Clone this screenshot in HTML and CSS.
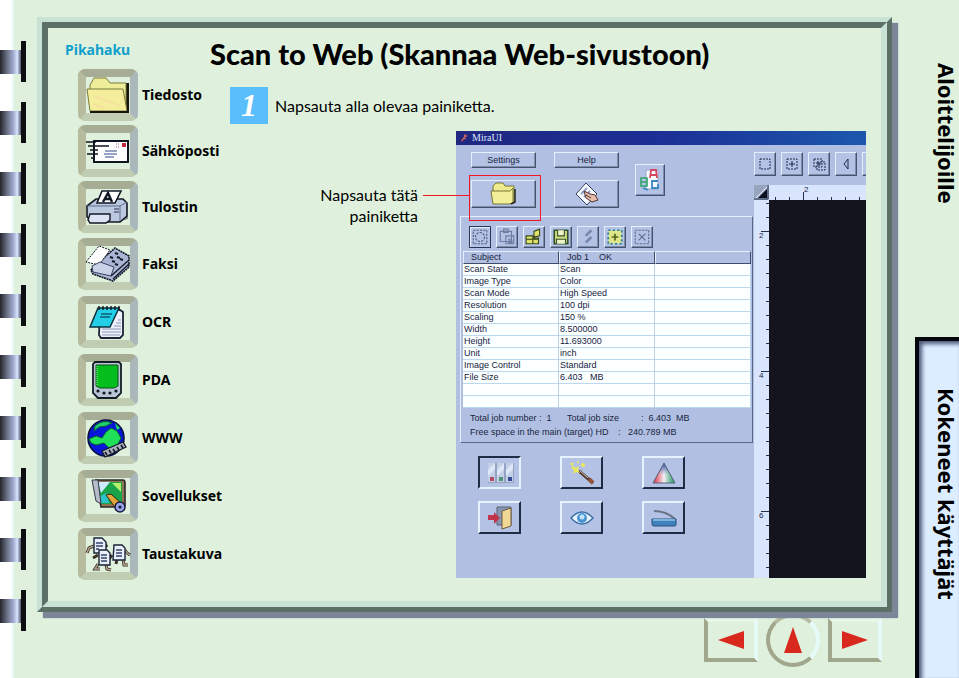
FILE: index.html
```html
<!DOCTYPE html>
<html lang="fi">
<head>
<meta charset="utf-8">
<title>Scan to Web (Skannaa Web-sivustoon)</title>
<link rel="stylesheet" href="styles.css">
</head>
<body>
<div class="page">
  <div class="binder" aria-hidden="true">
    <i class="ring"></i><i class="ring"></i><i class="ring"></i><i class="ring"></i><i class="ring"></i>
    <i class="ring"></i><i class="ring"></i><i class="ring"></i><i class="ring"></i><i class="ring"></i>
  </div>

  <div class="center">
    <div class="board">
      <div class="board-inner">
        <nav class="quick">
          <h2 class="quick-title">Pikahaku</h2>
          <ul class="quick-list">
            <li><a href="#"><span class="key">
              <svg viewBox="0 0 44 38"><path d="M24 7H42V36H8z" fill="#1c1c10"/><path d="M4 14V9L8 2H20L24 7H40V34H6z" fill="#eeed9a" stroke="#77783a"/><path d="M1 13H37L41 35H4z" fill="#f4ee9c" stroke="#77783a"/><path d="M4 36H42V7" fill="none" stroke="#15150c" stroke-width="2"/><path d="M8 20l26 10M7 28l12 4" stroke="#f4d8a0" stroke-width="2" opacity=".5"/></svg>
            </span><span>Tiedosto</span></a></li>
            <li><a href="#"><span class="key">
              <svg viewBox="0 0 44 38"><path d="M8 9H42V30H8z" fill="#fff" stroke="#101522" stroke-width="2"/><path d="M0 10H10M2 14H23M4 18H12M1 22H12M5 26H9" stroke="#101522" stroke-width="1.5"/><path d="M19 19H31M18 22H31M19 25H28" stroke="#7787b4" stroke-width="1.5"/><path d="M36 11h4v4h-4z" fill="#c22840"/><path d="M30 12h4M30 15h4" stroke="#b06080" stroke-dasharray="1 1"/></svg>
            </span><span>Sähköposti</span></a></li>
            <li><a href="#"><span class="key">
              <svg viewBox="0 0 44 38"><path d="M30 30l12-3v4l-10 3z" fill="#83908f"/><path d="M1 18L10 11H37L41 15V28L34 34H7L1 29z" fill="#bcc8e0" stroke="#121724" stroke-width="1.6"/><path d="M11 15L16 3H35L29 15z" fill="#fff" stroke="#121724" stroke-width="1.6"/><path d="M17 14L22 5L26 14M19 11H25" fill="none" stroke="#121724" stroke-width="2.4"/><path d="M1 18H34L41 14M34 18V33" fill="none" stroke="#5f6d8d"/><path d="M4 26H24V32L20 35H4L2 32z" fill="#dce4f3" stroke="#121724" stroke-width="1.4"/><path d="M28 21h5M28 24h5" stroke="#27304a"/></svg>
            </span><span>Tulostin</span></a></li>
            <li><a href="#"><span class="key">
              <svg viewBox="0 0 44 38"><path d="M5 25L21 10L29 3L43 11V22L27 36L7 29z" fill="#a9b5d3" stroke="#14192a" stroke-width="1.6" stroke-dasharray="2 .6"/><path d="M0 17L13 1L24 5L13 20z" fill="#fff" stroke="#14192a" stroke-dasharray="2 1"/><path d="M6 21L14 17L28 22L25 31L7 27z" fill="#c9d2e7" stroke="#38425e"/><path d="M25 31L43 15M27 34L43 19" stroke="#14192a" stroke-width="1.3"/><path d="M24 12l3 1M29 8l3 1M26 16l3 1M31 12l3 1M29 19l3 1M34 14l3 1" stroke="#14192a" stroke-width="2"/></svg>
            </span><span>Faksi</span></a></li>
            <li><a href="#"><span class="key">
              <svg viewBox="0 0 44 38"><path d="M14 7H34L37 9V32L34 35H15L13 32z" fill="#eef1fb" stroke="#1c2436" stroke-width="1.8"/><path d="M16 26H35M16 29H35M16 32H34M28 23H35M30 20H35M32 17H35" stroke="#8d97b8"/><path d="M12 5H33L24 24H4z" fill="#22cfe6" stroke="#0c3340" stroke-width="1.5"/><path d="M13 3v4M17 3v4M21 3v4M25 3v4M29 3v4M33 3v4" stroke="#10151f" stroke-width="1.4"/><path d="M15 11H26M14 14H24" stroke="#0b5d78" stroke-width="1.5"/></svg>
            </span><span>OCR</span></a></li>
            <li><a href="#"><span class="key">
              <svg viewBox="0 0 44 38"><path d="M9 1H33L35 3V32L30 37H12L7 32V3z" fill="#b9c4d6" stroke="#141c26" stroke-width="1.8"/><path d="M10 4H32V25L28 27H14L10 25z" fill="#04be1d" stroke="#0b5016"/><path d="M11 5V25" stroke="#9dffa8" stroke-dasharray="1 1"/><g fill="#10151f"><circle cx="12" cy="30" r="1.6"/><circle cx="18" cy="32" r="1.6"/><circle cx="24" cy="32" r="1.6"/><circle cx="30" cy="30" r="1.6"/></g></svg>
            </span><span>PDA</span></a></li>
            <li><a href="#"><span class="key">
              <svg viewBox="0 0 44 38"><circle cx="20" cy="19" r="18" fill="#0716d8" stroke="#081040" stroke-width="1.6"/><path d="M9 7Q17 0 26 4L20 7L13 8L8 12z" fill="#20d070" stroke="#07642c"/><path d="M3 20L10 17L16 19L20 13L25 9L31 12L35 19L31 27L23 29L18 24L10 26L5 24z" fill="#20e05a" stroke="#07642c"/><path d="M29 4l5 5-3 2z" fill="#20e05a"/><path d="M16 32L37 23L40 28L19 38z" fill="#aab0be" stroke="#141824" stroke-width="1.3"/><path d="M19 33l2 3M23 31l2 3M27 30l2 3M31 28l2 3M35 26l2 3" stroke="#141824" stroke-width="1.6"/></svg>
            </span><span>WWW</span></a></li>
            <li><a href="#"><span class="key">
              <svg viewBox="0 0 44 38"><path d="M10 3H37Q39 3 39 6V28Q39 30 36 30H15z" fill="#8e7654" stroke="#2c2a28" stroke-width="1.6"/><path d="M12 5H36V27H15z" fill="#19a34a"/><path d="M12 5H24L15 16z" fill="#cfe9ff"/><path d="M26 6h9v9z" fill="#b5ef6b"/><path d="M14 19l7-3 2 10h-8z" fill="#2bc2c8"/><path d="M6 3h6l3 24-5-3z" fill="#b7bccb" stroke="#343948"/><path d="M20 18L25 17L37 28L31 33z" fill="#e0a63a" stroke="#3b2507"/><circle cx="34" cy="30" r="5" fill="#9aa5e8" stroke="#1b1b40" stroke-width="1.5"/><circle cx="34" cy="30" r="1.6" fill="#15153a"/></svg>
            </span><span>Sovellukset</span></a></li>
            <li><a href="#"><span class="key">
              <svg viewBox="0 0 44 38"><g fill="none" stroke="#3a3128" stroke-width="3"><path d="M8 11L3 13L1 18M19 9l2 3M26 20l-3 4M39 15l2 3 3 2M12 29l-3 5h5M20 30l1 4 4 1M31 24l-1 5M37 24l1 6h4M12 20l-5 3"/></g><g fill="none" stroke="#b7a78f" stroke-width="1.4"><path d="M8 11L3 13L1 18M39 15l2 3 3 2M12 29l-3 5h5M20 30l1 4 4 1M37 24l1 6h4"/></g><g fill="#e9eefb" stroke="#1a2238" stroke-width="1.4"><path d="M8 3h8l4 4v11H8z"/><path d="M28 10h8l3 3v12H27z"/><path d="M13 15h8l3 3v12H13z"/></g><path d="M10 8h7M10 11h7M10 14h3M30 15h6M30 18h6M30 21h6M15 20h6M15 23h6M15 26h6" stroke="#33436c" stroke-width="1.3"/></svg>
            </span><span>Taustakuva</span></a></li>
          </ul>
        </nav>

        <main class="content">
          <h1>Scan to Web (Skannaa Web-sivustoon)</h1>
          <div class="step"><span class="step-no">1</span><p>Napsauta alla olevaa painiketta.</p></div>
          <div class="figure">
            <p class="callout">Napsauta tätä painiketta</p>
            <section class="window">
              <header class="titlebar">
                <svg viewBox="0 0 10 10"><path d="M2 9L7 2M5 1l4 2M4 5l3 1" stroke="#e06a5c" stroke-width="1.6"/></svg>
                <span>MiraUI</span>
              </header>
              <div class="window-body">
                <div class="panel">
                  <div class="actions">
                    <div class="action-grid">
                      <button class="btn">Settings</button>
                      <button class="btn">Help</button>
                      <div class="marked">
                        <button class="btn tall" aria-label="Scan to file"><svg class="i28" viewBox="0 0 28 24"><path d="M3 8V4L6 1H13L15 4H24V21H5z" fill="#eeeb8d" stroke="#777536"/><path d="M1 9H20L23 6V21L19 22H3z" fill="#f2ee99" stroke="#777536"/><path d="M25 7V20L21 22" fill="none" stroke="#26261a" stroke-width="1.5"/></svg></button>
                      </div>
                      <button class="btn tall" aria-label="Scan page"><svg class="i28" viewBox="0 0 28 24"><path d="M3 12L13 1L24 12L14 23z" fill="#f7faff" stroke="#35425e"/><path d="M8 12L14 6M11 15l6-6" stroke="#8da2cb" stroke-width="2"/><path d="M11 9L17 12L22 13L25 18L19 20L13 16z" fill="#e6bfae" stroke="#55342e"/><path d="M13 13l5 3" stroke="#55342e"/></svg></button>
                    </div>
                    <button class="btn rgb" aria-label="Color documents"><svg viewBox="0 0 22 26"><path d="M7 3h12v19H7z" fill="#f8fbff" stroke="#98a6c8"/><path d="M11 11l1-8h5l1 8M12 8h5" fill="none" stroke="#d5475c" stroke-width="1.8"/><path d="M2 11h6v8H2zM2 15h6" fill="none" stroke="#30a66a" stroke-width="1.6"/><path d="M4 21l5 2M19 14h-6v7h6v-4" fill="none" stroke="#3b87c4" stroke-width="1.8"/></svg></button>
                  </div>

                  <div class="group">
                    <div class="tools">
                      <button class="btn tool on" aria-label="Select job"><svg viewBox="0 0 16 16"><path d="M2 2h12v12H2z" fill="none" stroke="#53617f" stroke-dasharray="2 1"/><circle cx="8" cy="8" r="4" fill="none" stroke="#53617f" stroke-dasharray="2 1"/></svg></button>
                      <button class="btn tool" aria-label="Paste job"><svg viewBox="0 0 16 16"><path d="M2 3h10v9H2zM5 1h4v3H5zM7 7h7v7H7zM9 10h3" fill="none" stroke="#6e7c9f"/><path d="M9 11h4v3H9z" fill="#6e7c9f"/></svg></button>
                      <button class="btn tool" aria-label="Organize jobs"><svg viewBox="0 0 16 16"><path d="M1 7h6v7H1zM7 9h5v5H7zM8 3l5-2v6l-5 1z" fill="#dfe36a" stroke="#3c4a1d"/><path d="M1 10h11" stroke="#3c4a1d"/></svg></button>
                      <button class="btn tool" aria-label="Save job"><svg viewBox="0 0 16 16"><path d="M2 2h12v12H2z" fill="#d3dc7c" stroke="#315131" stroke-width="1.5"/><path d="M5 2v5h6V2M4 14v-4h8v4" fill="#eff3c8" stroke="#315131"/></svg></button>
                      <button class="btn tool" aria-label="Rename job"><svg viewBox="0 0 16 16"><path d="M6 7l5-5M6 13l5-5" stroke="#7a88aa" stroke-width="2.4"/></svg></button>
                      <button class="btn tool" aria-label="New job"><svg viewBox="0 0 16 16"><path d="M2 2h12v12H2z" fill="#dfe68a" stroke="#278097" stroke-width="1.5" stroke-dasharray="2 2"/><path d="M8 5v6M5 8h6" stroke="#566520" stroke-width="1.5"/></svg></button>
                      <button class="btn tool" aria-label="Delete job"><svg viewBox="0 0 16 16"><path d="M2 2h12v12H2z" fill="none" stroke="#5c6a8b" stroke-dasharray="2 1"/><path d="M5 5l6 6M11 5l-6 6" stroke="#5c6a8b"/></svg></button>
                    </div>
                    <table class="jobs">
                      <thead><tr><th>Subject</th><th>Job 1 &nbsp;&nbsp; OK</th><th></th></tr></thead>
                      <tbody>
                        <tr><td>Scan State</td><td>Scan</td><td></td></tr>
                        <tr><td>Image Type</td><td>Color</td><td></td></tr>
                        <tr><td>Scan Mode</td><td>High Speed</td><td></td></tr>
                        <tr><td>Resolution</td><td>100 dpi</td><td></td></tr>
                        <tr><td>Scaling</td><td>150 %</td><td></td></tr>
                        <tr><td>Width</td><td>8.500000</td><td></td></tr>
                        <tr><td>Height</td><td>11.693000</td><td></td></tr>
                        <tr><td>Unit</td><td>inch</td><td></td></tr>
                        <tr><td>Image Control</td><td>Standard</td><td></td></tr>
                        <tr><td>File Size</td><td>6.403 &nbsp; MB</td><td></td></tr>
                        <tr><td></td><td></td><td></td></tr>
                        <tr><td></td><td></td><td></td></tr>
                      </tbody>
                    </table>
                    <div class="status">
                      <p class="totals"><span>Total job number : &nbsp;1</span><span>Total job size</span><span>: &nbsp;6.403 &nbsp;MB</span></p>
                      <p class="space"><span>Free space in the main (target) HD</span><span>:</span><span>240.789 MB</span></p>
                    </div>
                  </div>

                  <div class="modes">
                    <button class="btn deep on" aria-label="Levels"><svg viewBox="0 0 28 24"><path d="M2 2h26v20H2z" fill="#95a3c2"/><path d="M2 2h7v19H2zM11 2h7v19h-7zM20 2h7v19h-7z" fill="#c3cfe6"/><path d="M2 9l7-7v6l-7 7zM11 9l7-7v6l-7 7zM20 9l7-7v6l-7 7z" fill="#dfe8f8"/><path d="M4 16h4v4H4z" fill="#b74863"/><path d="M13 16h4v4h-4z" fill="#4d9474"/><path d="M22 16h4v4h-4z" fill="#354a90"/></svg></button>
                    <button class="btn deep" aria-label="Auto adjust"><svg viewBox="0 0 28 24"><path d="M11 10L25 22" stroke="#4f382e" stroke-width="3"/><path d="M12 10l8 7" stroke="#dcc8b4"/><path d="M21 18l4 4" stroke="#93533a" stroke-width="4"/><g fill="#e9ea5b"><path d="M5 5l3 2 3-2-1 4 2 3-4-1-3 2 1-4-3-2z"/><circle cx="4" cy="3" r="1.5"/><circle cx="15" cy="4" r="2"/><circle cx="10" cy="1" r="1"/></g></svg></button>
                    <button class="btn deep" aria-label="Color"><svg viewBox="0 0 28 24"><defs><linearGradient id="tri" x1="0" x2="1"><stop offset=".1" stop-color="#dd4f5d"/><stop offset=".5" stop-color="#f5eff6"/><stop offset=".9" stop-color="#3ca474"/></linearGradient><linearGradient id="top" x1="0" y1="0" x2="0" y2="1"><stop offset="0" stop-color="#203c93"/><stop offset=".6" stop-color="#587bc0" stop-opacity="0"/></linearGradient></defs><path d="M14 2L25 22H3z" fill="url(#tri)"/><path d="M14 2L25 22H3z" fill="url(#top)" stroke="#59647e"/></svg></button>
                    <button class="btn deep" aria-label="Exit"><svg viewBox="0 0 28 24"><path d="M11 1h14v18H11z" fill="#8796b0" stroke="#566277"/><path d="M16 5L25 2V20L16 23z" fill="#f1d897" stroke="#6e5b38"/><path d="M2 9h6V6l6 6-6 6v-4H2z" fill="#c0354c"/></svg></button>
                    <button class="btn deep" aria-label="Preview"><svg viewBox="0 0 28 24"><path d="M3 12Q14 0 25 12Q14 24 3 12z" fill="#e9f5ff" stroke="#3b6ea5" stroke-width="1.4"/><circle cx="14" cy="12" r="5" fill="#4a93d0"/><circle cx="14" cy="11" r="2.5" fill="#bfe3fa"/></svg></button>
                    <button class="btn deep" aria-label="Scan"><svg viewBox="0 0 28 24"><path d="M4 5Q16 5 25 13" fill="none" stroke="#6b7486" stroke-width="2"/><path d="M2 13H26V19Q26 20 24 20H4Q2 20 2 18z" fill="#3f80bd" stroke="#28507e"/><path d="M3 14H25" stroke="#7db4de" stroke-width="2"/></svg></button>
                  </div>
                </div>

                <div class="preview">
                  <div class="view-tools">
                    <button class="btn view" aria-label="Select area"><svg viewBox="0 0 16 16"><path d="M3 3h10v10H3z" fill="none" stroke="#1d2a4b" stroke-dasharray="2 1"/></svg></button>
                    <button class="btn view" aria-label="Center area"><svg viewBox="0 0 16 16"><path d="M3 3h10v10H3z" fill="none" stroke="#1d2a4b" stroke-dasharray="2 1"/><path d="M8 5v6M5 8h6" stroke="#1d2a4b"/></svg></button>
                    <button class="btn view" aria-label="Duplicate area"><svg viewBox="0 0 16 16"><path d="M3 3h8v8H3zM6 6h8v8H6z" fill="none" stroke="#1d2a4b" stroke-dasharray="2 1"/><path d="M8 6v4M6 8h4" stroke="#1d2a4b"/></svg></button>
                    <button class="btn view" aria-label="Flip"><svg viewBox="0 0 16 16"><path d="M10 3v10L6 8z" fill="none" stroke="#1d2a4b"/></svg></button>
                    <button class="btn view" aria-label="More"></button>
                  </div>
                  <div class="canvas">
                    <svg class="corner" viewBox="0 0 15 15"><path d="M0 0h15v15H0z" fill="#98a5bf"/><path d="M1 14L14 1" stroke="#eef3ff"/><path d="M13 4v9H4z" fill="#0b1020"/><path d="M14 0v14H0" fill="none" stroke="#27334f"/></svg>
                    <div class="ruler-x"><span>2</span></div>
                    <div class="ruler-y"><span>2</span><span>4</span><span>6</span></div>
                    <div class="sheet"></div>
                  </div>
                </div>
              </div>
            </section>
          </div>
        </main>
      </div>
    </div>

    <nav class="pager">
      <a class="page-btn" href="#" aria-label="Edellinen"><svg viewBox="0 0 26 18"><path d="M0 9L26 0V18z" fill="#d9291f"/></svg></a>
      <a class="page-btn round" href="#" aria-label="Alkuun"><svg viewBox="0 0 18 26"><path d="M9 0L18 26H0z" fill="#d9291f"/></svg></a>
      <a class="page-btn" href="#" aria-label="Seuraava"><svg viewBox="0 0 26 18"><path d="M26 9L0 0V18z" fill="#d9291f"/></svg></a>
    </nav>
  </div>

  <nav class="tabs">
    <a class="tab" href="#">Aloittelijoille</a>
    <a class="tab active" href="#">Kokeneet käyttäjät</a>
  </nav>
</div>
</body>
</html>
```
FILE: styles.css
```css
* { box-sizing: border-box; }
body { margin: 0; background: #dff1dc; color: #000; font-family: Lato, "Liberation Sans", sans-serif; }
h1, h2, p, ul { margin: 0; padding: 0; }
ul { list-style: none; }
a { color: inherit; text-decoration: none; }
svg { display: block; flex: none; overflow: visible; }

.page { display: grid; grid-template-columns: 37px 1fr 67px; min-height: 100vh; overflow: hidden; }

/* Spiral binding */
.binder { display: flex; flex-direction: column; gap: 20px; padding-top: 41px; background: linear-gradient(90deg, #fff 11px, #e6f8f4 13px, #dff1dc 15px); }
.ring { display: flex; align-items: center; width: 26px; height: 41px; border-right: 5px solid #0c0e10; }
.ring::before { content: ""; width: 100%; height: 24px; background: linear-gradient(90deg, #24242c, #6d7488 35%, #a3add2 65%, #dbe4ff 82%, #4c5468); }

/* Framed board */
.center { display: flex; flex-direction: column; padding-top: 17px; }
.board { position: relative; z-index: 1; flex: 1; display: flex; border: 5px solid; border-color: #c8e3d6 #5c7068 #5c7068 #c8e3d6; box-shadow: 6px 6px 1px #7b8798; }
.board-inner { flex: 1; display: flex; border: 6px solid; border-color: #5c7068 #c8e3d6 #c8e3d6 #5c7068; background: #dff1dc; }

/* Quick access list */
.quick { width: 162px; padding: 12px 0 0 17px; }
.quick-title { color: #119fce; font: bold 14px/20px "Noto Sans", sans-serif; }
.quick-list { padding: 7px 0 0 13px; }
.quick-list a { display: flex; align-items: center; gap: 4px; height: 58px; font: bold 14px/20px "Noto Sans", sans-serif; white-space: nowrap; }
.quick-list li:nth-child(-n+3) a { height: 56px; }
.key { display: flex; align-items: center; justify-content: center; flex: none; width: 60px; height: 52px; border: 8px solid; border-color: #a7ad94 #aab8bb #c0cdb3 #b7bb9e; border-radius: 7px; background: #dff1dc; }
.key svg { width: 44px; height: 38px; }

/* Main content */
.content { flex: 1; min-width: 0; padding: 7px 15px 0 0; }
h1 { font: 900 29px/38px Lato, sans-serif; white-space: nowrap; }
.step { display: flex; align-items: center; gap: 7px; padding: 14px 0 7px 20px; }
.step-no { width: 38px; height: 37px; background: #5bbefc; color: #fff; font: italic bold 32px/37px "Liberation Serif", serif; text-align: center; }
.step p, .callout { font-size: 16px; line-height: 21px; }
.figure { display: grid; grid-template-columns: 208px 1fr; gap: 38px; }
.callout { justify-self: end; width: 110px; padding-top: 53px; text-align: right; }

/* Application window */
.window { min-width: 0; background: #b1c0e2; font: 9px/12px "Liberation Sans", sans-serif; color: #18243f; }
.titlebar { display: flex; align-items: center; gap: 4px; height: 14px; padding-left: 4px; background: linear-gradient(90deg, #202880, #1c2f96 50%, #1c58ac); color: #dde4ff; font: 10px/14px "Liberation Serif", serif; }
.titlebar svg { width: 8px; height: 8px; }
.window-body { display: flex; min-height: 433px; }
.panel { width: 298px; flex: none; }
.btn { display: flex; align-items: center; justify-content: center; padding: 0; border: 1px solid; border-color: #e6efff #46536f #46536f #e6efff; outline: 0; box-shadow: inset -1px -1px #7e8cac; background: #b4c3e5; color: inherit; font: inherit; height: 16px; flex: none; }
.btn.tall { height: 28px; width: 100%; }
.i28 { width: 28px; height: 24px; }
.actions { display: flex; gap: 16px; padding: 7px 0 0 15px; }
.action-grid { display: grid; grid-template-columns: 65px 65px; gap: 12px 18px; }
.marked { position: relative; }
.marked::before { content: ""; position: absolute; inset: -5px -5px -13px -2px; border: 1px solid #f01822; }
.marked::after { content: ""; position: absolute; right: 67px; top: 15px; width: 46px; height: 1px; background: #f01822; }
.rgb { width: 30px; height: 32px; margin-top: 12px; }
.rgb svg { width: 22px; height: 26px; }

.group { margin: 8px 1px 0 4px; border: 1px solid; border-color: #e6efff #5a6887 #5a6887 #e6efff; }
.tools { display: flex; gap: 5px; padding: 9px 8px 3px; }
.tool { width: 22px; height: 22px; }
.tool svg { width: 18px; height: 18px; }
.tool.on { border-color: #2b3654; box-shadow: inset 1px 1px #e6efff; }

.jobs { width: 288px; margin-left: 2px; border-collapse: separate; border-spacing: 0; table-layout: fixed; }
.jobs th { height: 13px; padding: 0 0 0 7px; border: 1px solid; border-color: #e6efff #3f4c6a #3f4c6a #e6efff; text-align: left; font-weight: normal; line-height: 11px; }
.jobs td { height: 12px; padding: 0 0 0 1px; border-right: 1px solid #bcd3ec; border-bottom: 1px solid #bcd8ee; background: #fcffff; line-height: 11px; }
.status { padding: 3px 0 3px 9px; line-height: 14px; }
.status p { display: flex; white-space: pre; }
.totals span:nth-child(1) { width: 97px; }
.totals span:nth-child(2) { width: 74px; }
.space span:nth-child(1) { width: 148px; }
.space span:nth-child(2) { width: 10px; }

.modes { display: grid; grid-template-columns: repeat(3, 43px); gap: 12px 39px; padding: 13px 0 43px 22px; }
.deep { height: 33px; border-width: 2px; border-color: #e6f3ff #202b45 #202b45 #e6f3ff; box-shadow: none; }
.deep.on { border-color: #202b45 #e6f3ff #e6f3ff #202b45; }
.deep svg { width: 28px; height: 24px; }

.preview { flex: 1; min-width: 0; display: flex; flex-direction: column; overflow: hidden; }
.view-tools { display: flex; gap: 5px; height: 40px; padding-top: 7px; }
.view { width: 22px; height: 24px; }
.view svg { width: 16px; height: 16px; }
.canvas { flex: 1; display: grid; grid-template: 15px 1fr / 15px 1fr; }
.corner { width: 15px; height: 15px; }
.ruler-x, .ruler-y { background-color: #d9e5fd; font-size: 8px; line-height: 10px; }
.ruler-x { padding-left: 35px; background-image: linear-gradient(90deg, #25304d 1px, transparent 1px), linear-gradient(90deg, #25304d 1px, transparent 1px); background-size: 14px 3px, 140px 8px; background-position: 6px 100%, 34px 100%; background-repeat: repeat-x; }
.ruler-y { display: flex; flex-direction: column; gap: 130px; padding: 31px 0 0 5px; background-image: linear-gradient(#25304d 1px, transparent 1px), linear-gradient(#25304d 1px, transparent 1px); background-size: 3px 14px, 8px 140px; background-position: 100% 3px, 100% 31px; background-repeat: repeat-y; }
.sheet { background: #13141d; }

/* Page buttons */
.pager { display: flex; justify-content: flex-end; align-items: center; gap: 8px; height: 66px; padding: 0 10px 11px 0; }
.page-btn { display: flex; align-items: center; justify-content: center; width: 54px; height: 44px; border: 4px solid; border-color: #e6f8ea #e6fbf8 #a0a78c #a0a78c; }
.page-btn svg { width: 26px; height: 18px; }
.page-btn.round { height: 54px; border-radius: 50%; border-color: #b4bba2 #e6fbf8 #a0a78c #a0a78c; }
.page-btn.round svg { width: 18px; height: 26px; }

/* Side tabs */
.tabs { display: grid; grid-template-rows: 337px 1fr; padding-left: 23px; }
.tab { display: flex; align-items: flex-start; justify-content: flex-start; writing-mode: vertical-rl; padding-top: 63px; font: bold 22px/24px "Noto Sans", sans-serif; white-space: nowrap; }
.tab.active { padding-top: 47px; border: solid #06070c; border-width: 4px 0 0 4px; background: #dcedff; box-shadow: inset 3px 3px 4px #4a5578; }
```
